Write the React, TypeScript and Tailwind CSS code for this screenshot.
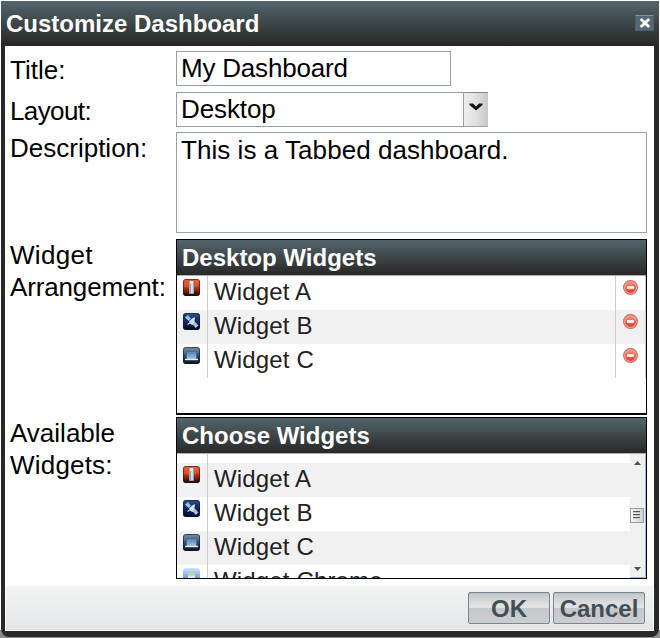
import React from 'react';

type Kind = 'a' | 'b' | 'c' | 'chrome';

function WidgetIcon({ kind }: { kind: Kind }) {
  const top = { a: '#e8502c', b: '#2d4f91', c: '#5d7f9c', chrome: '#d0e5fa' }[kind];
  const mid = { a: '#c62f0c', b: '#0d2861', c: '#2b4d72', chrome: '#79aae5' }[kind];
  const end = { a: '#190301', b: '#020a20', c: '#07101b', chrome: '#1e5bb8' }[kind];
  return (
    <svg width="17" height="17" viewBox="0 0 17 17" className="block">
      <defs>
        <linearGradient id={'bg-' + kind} x1="0" y1="0" x2="0" y2="1">
          <stop offset="0" stopColor={top} />
          <stop offset="0.5" stopColor={mid} />
          <stop offset="1" stopColor={end} />
        </linearGradient>
        <linearGradient id="screen" x1="0" y1="0" x2="0" y2="1">
          <stop offset="0" stopColor="#5f82ad" />
          <stop offset="1" stopColor="#9dbdf0" />
        </linearGradient>
      </defs>
      <rect x="0" y="0" width="17" height="17" rx="3" fill={'url(#bg-' + kind + ')'} />
      {kind !== 'chrome' && <rect x="0.5" y="0.5" width="16" height="16" rx="2.5" fill="none" stroke="#10141c" strokeOpacity="0.5" />}
      {kind === 'a' && (
        <>
          <path d="M1 1h15v6Q8 10 1 8z" fill="#ff9878" opacity=".25" />
          <rect x="6" y="2" width="5" height="13" rx="1" fill="#8fa9b5" />
          <rect x="7" y="2" width="3" height="3" fill="#e3e9ea" />
          <rect x="8" y="5" width="2" height="9" fill="#bfe0f0" />
        </>
      )}
      {kind === 'b' && (
        <>
          <path d="M2 4.5L5 2L8 5.5L5.5 8z" fill="#8db9e5" />
          <path d="M9.5 11L12.5 9L15.5 12.5L12.5 15z" fill="#8db9e5" />
          <path d="M3.5 4.5l3 2.5M11.5 11.5l2.5 2" stroke="#c5dff7" />
          <path d="M6 8.5L9 5.5L12 4L11.5 8L12 9.5L9.5 12L7.5 11z" fill="#d9dfe0" />
          <path d="M4.5 11.5L7.5 9.5" stroke="#c6ced6" strokeWidth="1.4" />
        </>
      )}
      {kind === 'c' && (
        <>
          <path d="M1 1h15v5Q8 8 1 7z" fill="#fff" opacity=".12" />
          <rect x="3" y="4" width="11" height="8" fill="#49698f" />
          <rect x="4" y="5" width="9" height="7" fill="url(#screen)" />
          <path d="M2 12.5h13" stroke="#e8f0f7" strokeWidth="1.4" />
        </>
      )}
      {kind === 'chrome' && (
        <>
          <path d="M5 5h7v12H5z" fill="#dce9e5" />
          <path d="M5 6.5h7" stroke="#b9d36f" strokeWidth="2" />
          <path d="M7 9h3v8H7z" fill="#f0f1da" />
        </>
      )}
    </svg>
  );
}

function RemoveIcon() {
  return (
    <svg width="16" height="16" viewBox="0 0 16 16" className="block">
      <defs>
        <linearGradient id="remove" x1="0" y1="0" x2="0" y2="1">
          <stop offset="0" stopColor="#f5917f" />
          <stop offset="1" stopColor="#dc3d32" />
        </linearGradient>
      </defs>
      <circle cx="7.5" cy="7.5" r="6.9" fill="#f6b09e" stroke="#d0665a" strokeWidth="1.1" />
      <circle cx="7.5" cy="7.5" r="5.4" fill="url(#remove)" />
      <path d="M4 7.5h7" stroke="#fff" strokeWidth="2.6" />
    </svg>
  );
}

function WidgetRow({ kind, name, shaded, removable }: { kind: Kind; name: string; shaded?: boolean; removable?: boolean }) {
  return (
    <div className={'flex h-[34px] shrink-0 ' + (shaded ? 'bg-[#f1f1f1]' : 'bg-white')}>
      <div className="w-[31px] shrink-0 border-r border-[#cccccc] pt-[3px] pl-[6px]"><WidgetIcon kind={kind} /></div>
      <div className="grow pl-[6px] text-2xl leading-[32px] tracking-[0.15px] whitespace-nowrap text-[#222222]">{name}</div>
      {removable && <div className="w-[31px] shrink-0 border-x border-[#cccccc] pt-[4px] pl-[7px]"><RemoveIcon /></div>}
    </div>
  );
}

function PanelTitle({ children }: { children: React.ReactNode }) {
  return (
    <h2 className="h-9 shrink-0 border-b border-[#b0b0b0] bg-gradient-to-b from-[#53666d] to-[#282828] pl-[5px] text-2xl leading-[36px] font-bold text-white">
      {children}
    </h2>
  );
}

function Scrollbar() {
  return (
    <div className="flex w-4 shrink-0 flex-col border-r border-b border-[#9eb8e8] bg-[#f0f0f0]">
      <svg width="15" height="54" viewBox="0 0 15 54" className="block shrink-0">
        <path d="M4 11L7.5 7L11 11z" fill="#505050" />
      </svg>
      <div className="flex h-[15px] w-[14px] shrink-0 flex-col gap-px border border-[#969ba0] bg-gradient-to-r from-[#f7f7f7] to-[#cfd1d4] pt-[2px] pl-[2px]">
        <span className="h-[2px] w-[7px] border-b border-[#c4c6c9] bg-[#55585c]" />
        <span className="h-[2px] w-[7px] border-b border-[#c4c6c9] bg-[#55585c]" />
        <span className="h-[2px] w-[7px] border-b border-[#c4c6c9] bg-[#55585c]" />
      </div>
      <svg width="15" height="54" viewBox="0 0 15 54" className="block shrink-0">
        <path d="M4 44L7.5 48L11 44z" fill="#505050" />
      </svg>
    </div>
  );
}

const button = 'h-8 rounded-[2px] border border-[#7b878c] bg-[linear-gradient(#c4c8ca_0%,#e4e5e6_48%,#c5c7ca_50%,#cbcdd0_100%)] text-2xl leading-[31px] font-bold text-[#434e55] shadow-[inset_0_1px_0_#b5babc]';

export default function App() {
  return (
    <div className="h-[638px] w-[660px] overflow-hidden bg-[linear-gradient(#fff_630px,#8c8c8c_630px)] pt-px pl-px font-['Liberation_Sans',Arial,sans-serif] text-black">
      <div className="flex h-[636px] w-[658px] flex-col rounded-b-[8px] bg-[#292929]">
        <header className="flex h-[45px] shrink-0 items-start bg-gradient-to-b from-[#53666d] to-[#272727] pl-[5px]">
          <h1 className="grow text-2xl leading-[45px] font-bold text-white">Customize Dashboard</h1>
          <button className="mt-[14px] mr-[5px] flex h-4 w-[19px] items-center justify-center border border-[#4d616c] border-t-[#84929a] bg-[#536774]">
            <svg width="12" height="12" viewBox="0 0 12 12" className="shrink-0"><path d="M1.8 2L10.2 10M10.2 2L1.8 10" stroke="white" strokeWidth="3" /></svg>
          </button>
        </header>
        <div className="ml-1 flex h-[585px] w-[649px] flex-col bg-white">
          <main className="flex h-[540px] shrink-0 flex-col pt-[5px] pl-[5px] text-[26px] leading-8">
            <div className="flex h-[41px] shrink-0">
              <label className="w-[166px] shrink-0 pt-[3px]">Title:</label>
              <div className="h-[35px] w-[275px] border border-[#96a2aa] pl-1 leading-[33px] tracking-[-0.2px]">My Dashboard</div>
            </div>
            <div className="flex h-10 shrink-0">
              <label className="w-[166px] shrink-0 pt-[3px] tracking-[-0.6px]">Layout:</label>
              <div className="h-[35px] w-[287px] border border-r-0 border-[#96a2aa] pl-1 leading-[33px] tracking-[-0.1px]">Desktop</div>
              <button className="flex h-[35px] w-[25px] items-start justify-center border-y border-t-[#888] border-b-[#96a2aa] border-l border-l-[#96a2aa] bg-gradient-to-r from-[#eeeeee] via-[#e1e1e1] to-[#c8c8c8] pt-[9px]">
                <svg width="16" height="10" viewBox="0 0 16 10" className="shrink-0"><path d="M1.5 1.5L5 1.5L8 4.5L11 1.5L14.5 1.5L14.5 3L8 8.5L1.5 3z" fill="#151515" /></svg>
              </button>
            </div>
            <div className="flex h-[107px] shrink-0">
              <label className="w-[166px] shrink-0">Description:</label>
              <div className="h-[101px] w-[471px] border border-[#96a2aa] pt-px pl-1 tracking-[0.05px]">This is a Tabbed dashboard.</div>
            </div>
            <div className="flex h-[178px] shrink-0">
              <label className="w-[166px] shrink-0"><span className="tracking-[0.3px]">Widget</span><br /><span className="tracking-[-0.15px]">Arrangement:</span></label>
              <section className="flex h-44 w-[471px] flex-col border border-b-2 border-black">
                <PanelTitle>Desktop Widgets</PanelTitle>
                <WidgetRow kind="a" name="Widget A" removable />
                <WidgetRow kind="b" name="Widget B" shaded removable />
                <WidgetRow kind="c" name="Widget C" removable />
              </section>
            </div>
            <div className="flex h-[162px] shrink-0">
              <label className="w-[166px] shrink-0">Available<br /><span className="tracking-[0.2px]">Widgets:</span></label>
              <section className="flex h-[162px] w-[471px] flex-col border border-black">
                <PanelTitle>Choose Widgets</PanelTitle>
                <div className="flex h-[124px]">
                  <div className="flex grow flex-col overflow-hidden">
                    <div className="h-[9px] w-[31px] shrink-0 border-r border-[#cccccc]" />
                    <WidgetRow kind="a" name="Widget A" shaded />
                    <WidgetRow kind="b" name="Widget B" />
                    <WidgetRow kind="c" name="Widget C" shaded />
                    <WidgetRow kind="chrome" name="Widget Chrome" />
                  </div>
                  <Scrollbar />
                </div>
              </section>
            </div>
          </main>
          <footer className="mx-px flex h-11 shrink-0 justify-end gap-[3px] bg-gradient-to-b from-[#f3f5f4] to-[#e4e5e7] pt-[6px] pr-[8px]">
            <button className={'w-[82px] ' + button}>OK</button>
            <button className={'w-[92px] ' + button}>Cancel</button>
          </footer>
        </div>
      </div>
    </div>
  );
}
